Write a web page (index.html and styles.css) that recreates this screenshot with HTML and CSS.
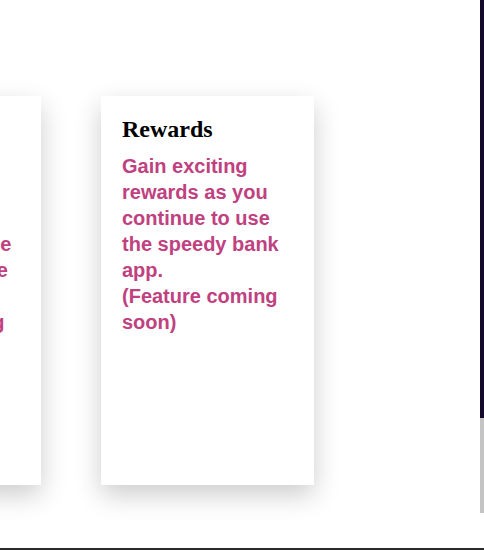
FILE: index.html
```html
<!DOCTYPE html>
<html lang="en">
<head>
<meta charset="utf-8">
<title>Features</title>
<link rel="stylesheet" href="styles.css">
</head>
<body>
<div class="frame">
  <div class="stage">
    <div class="viewport">
      <div class="track">
        <div class="card">
          <h2 class="card-title">Transfers</h2>
          <p class="card-text">Send money to your family and friends that is quick and simple online to anyone you want.<br>(Feature coming soon)</p>
        </div>
        <div class="card">
          <h2 class="card-title">Rewards</h2>
          <p class="card-text">Gain exciting rewards as you continue to use the speedy bank app.<br>(Feature coming soon)</p>
        </div>
      </div>
    </div>
    <div class="rail">
      <div class="rail-thumb"></div>
      <div class="rail-track"></div>
    </div>
  </div>
  <div class="bottom-bar"></div>
</div>
</body>
</html>
```

FILE: styles.css
```css
html, body {
  margin: 0;
  padding: 0;
  background: #ffffff;
}

.frame {
  width: 484px;
  height: 550px;
  display: flex;
  flex-direction: column;
  overflow: hidden;
}

.stage {
  flex: 1;
  display: flex;
  min-height: 0;
}

.viewport {
  flex: 1;
  overflow: hidden;
}

.track {
  display: flex;
  gap: 60px;
  padding-top: 96px;
  margin-left: -172px;
}

.card {
  flex: 0 0 213px;
  box-sizing: border-box;
  height: 389px;
  padding: 20px 20px 20px 21px;
  background: #ffffff;
  box-shadow: 0 10px 25px rgba(0, 0, 0, 0.2);
}

.card-title {
  margin: 0 0 10px;
  font-family: "Liberation Serif", "Times New Roman", serif;
  font-size: 24px;
  font-weight: bold;
  line-height: normal;
  color: #000000;
}

.card-text {
  margin: 0;
  font-family: "Liberation Sans", Arial, sans-serif;
  font-size: 20px;
  font-weight: bold;
  line-height: 26px;
  color: #bf4180;
}

.rail {
  flex: 0 0 4px;
  display: flex;
  flex-direction: column;
}

.rail-thumb {
  height: 418px;
  background: #130a2b;
}

.rail-track {
  height: 95px;
  background: #c4c4c4;
}

.bottom-bar {
  height: 2px;
  background: #2b2b2b;
}
```
